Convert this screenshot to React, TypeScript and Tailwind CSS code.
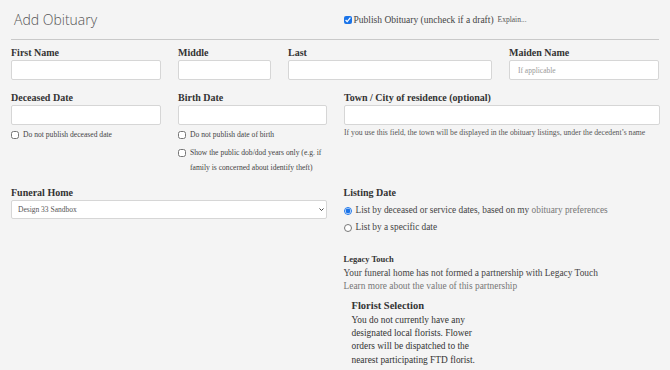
import React from 'react';

const serif = { fontFamily: '"Liberation Serif", "DejaVu Serif", serif' };

function Label({ children }: { children: React.ReactNode }) {
  return <div className="text-[10px] font-bold leading-[14px] text-[#333]">{children}</div>;
}

function TextInput({ placeholder }: { placeholder?: string }) {
  return (
    <input
      type="text"
      placeholder={placeholder}
      className="block w-full h-[20px] bg-white border border-[#d6d6d6] rounded-[2px] px-[8px] text-[7.5px] placeholder:text-[#999] outline-none"
    />
  );
}

function Check({ children, checked }: { children: React.ReactNode; checked?: boolean }) {
  return (
    <label className="flex items-start gap-[4px]">
      <input type="checkbox" defaultChecked={checked} className="mt-[4px] w-[8px] h-[8px] shrink-0 accent-[#1a73e8]" />
      <span>{children}</span>
    </label>
  );
}

export default function App() {
  return (
    <div className="min-h-screen bg-[#f4f4f4] px-[11px] text-[#444]" style={serif}>
      {/* header */}
      <div className="grid grid-cols-2 gap-[17px] h-[40px] items-center border-b border-[#c9c9c9]">
        <h1 className="pl-[3px] text-[14px] font-light text-[#555]" style={{ fontFamily: '"Open Sans", sans-serif' }}>
          Add Obituary
        </h1>
        <div className="flex items-center gap-[2px] text-[9.5px] text-[#444] pt-[1px]">
          <input type="checkbox" defaultChecked className="w-[8px] h-[8px] accent-[#1a73e8]" />
          <span>Publish Obituary (uncheck if a draft)</span>
          <a className="ml-[2px] text-[7.5px] text-[#555]">Explain...</a>
        </div>
      </div>

      {/* names */}
      <div className="grid grid-cols-[150px_93px_204px_150px] gap-[17px] mt-[6px]">
        <div>
          <Label>First Name</Label>
          <TextInput />
        </div>
        <div>
          <Label>Middle</Label>
          <TextInput />
        </div>
        <div>
          <Label>Last</Label>
          <TextInput />
        </div>
        <div>
          <Label>Maiden Name</Label>
          <TextInput placeholder="If applicable" />
        </div>
      </div>

      {/* dates */}
      <div className="grid grid-cols-[150px_149px_316px] gap-[17px] mt-[11px]">
        <div>
          <Label>Deceased Date</Label>
          <TextInput />
          <div className="mt-[2px] text-[7.6px] leading-[16px]">
            <Check>Do not publish deceased date</Check>
          </div>
        </div>
        <div>
          <Label>Birth Date</Label>
          <TextInput />
          <div className="mt-[2px] text-[7.6px] leading-[16px]">
            <Check>Do not publish date of birth</Check>
            <div className="leading-[15px] mt-[2px]">
              <Check>Show the public dob/dod years only (e.g. if family is concerned about identify theft)</Check>
            </div>
          </div>
        </div>
        <div>
          <Label>Town / City of residence (optional)</Label>
          <TextInput />
          <p className="mt-[1px] text-[7.7px] leading-[13px] text-[#555]">
            If you use this field, the town will be displayed in the obituary listings, under the decedent’s name
          </p>
        </div>
      </div>

      {/* funeral home / listing */}
      <div className="grid grid-cols-2 gap-[17px] mt-[11px]">
        <div>
          <Label>Funeral Home</Label>
          <div className="relative">
            <select className="block w-full h-[19px] appearance-none bg-white border border-[#d6d6d6] rounded-[2px] pl-[6px] text-[7.5px] text-[#555] outline-none">
              <option>Design 33 Sandbox</option>
            </select>
            <svg
              viewBox="0 0 10 6"
              className="absolute right-[3px] top-[8px] w-[5px] h-[3px] pointer-events-none"
              fill="none"
              stroke="#444"
              strokeWidth="2"
            >
              <path d="M1 1l4 4 4-4" />
            </svg>
          </div>
        </div>
        <div>
          <Label>Listing Date</Label>
          <div className="text-[9.3px] leading-[17px] mt-[2px]">
            <label className="flex items-center gap-[4px]">
              <input type="radio" name="listing" defaultChecked className="w-[8px] h-[8px] accent-[#1a73e8]" />
              <span>
                List by deceased or service dates, based on my <a className="text-[#777]">obituary preferences</a>
              </span>
            </label>
            <label className="flex items-center gap-[4px]">
              <input type="radio" name="listing" className="w-[8px] h-[8px] accent-[#1a73e8]" />
              <span>List by a specific date</span>
            </label>
          </div>

          <div className="mt-[17px] text-[9.4px] leading-[13.5px]">
            <div className="font-bold text-[8.5px] text-[#333]">Legacy Touch</div>
            <div>Your funeral home has not formed a partnership with Legacy Touch</div>
            <a className="text-[#777]">Learn more about the value of this partnership</a>
          </div>

          <div className="mt-[5px] ml-[8px] w-[140px] text-[9.4px] leading-[13.3px] text-[#333]">
            <div className="font-bold text-[10.5px] text-[#333]">Florist Selection</div>
            <p className="mt-[2px]">
              You do not currently have any designated local florists. Flower orders will be dispatched to the nearest
              participating FTD florist.
            </p>
          </div>
        </div>
      </div>
    </div>
  );
}
